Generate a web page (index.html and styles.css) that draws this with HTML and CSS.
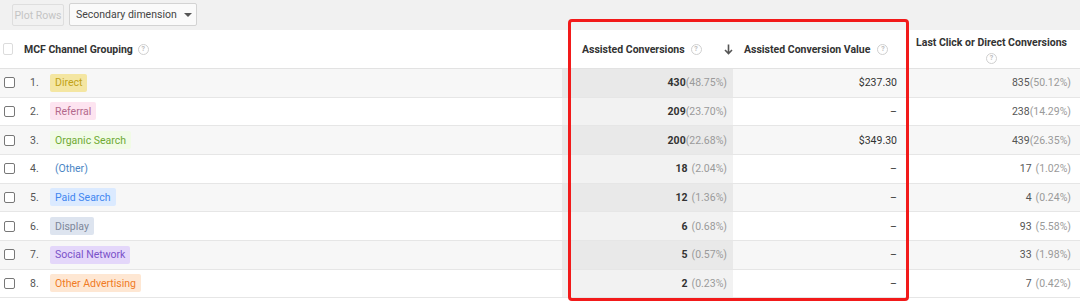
FILE: index.html
```html
<!DOCTYPE html>
<html>
<head>
<meta charset="utf-8">
<link rel="stylesheet" href="styles.css">
</head>
<body>
<div class="page">
  <div class="toolbar">
    <button class="btn btn-disabled">Plot Rows</button>
    <button class="btn btn-dim">Secondary dimension <span class="caret"></span></button>
  </div>
  <div class="table">
    <div class="row head">
      <div class="cell c-name">
        <span class="cb cb-light"></span>
        <span class="h-label">MCF Channel Grouping</span>
        <span class="help">?</span>
      </div>
      <div class="cell c-ac head-ac">
        <span class="h-label">Assisted Conversions</span>
        <span class="help">?</span>
        <svg class="sort" width="9" height="11" viewBox="0 0 9 11"><path d="M4.5 0.5 V9.5 M1 6 L4.5 9.5 L8 6" fill="none" stroke="#555" stroke-width="1.6"/></svg>
      </div>
      <div class="cell c-val head-val">
        <span class="h-label">Assisted Conversion Value</span>
        <span class="help">?</span>
      </div>
      <div class="cell c-last head-last">
        <span class="h-label">Last Click or Direct Conversions</span>
        <span class="help">?</span>
      </div>
    </div>

    <div class="row odd">
      <div class="cell c-name"><span class="cb"></span><span class="num">1.</span><span class="chip chip-direct">Direct</span></div>
      <div class="cell c-ac"><b>430</b><span class="pct">(48.75%)</span></div>
      <div class="cell c-val">$237.30</div>
      <div class="cell c-last">835<span class="pct">(50.12%)</span></div>
    </div>
    <div class="row">
      <div class="cell c-name"><span class="cb"></span><span class="num">2.</span><span class="chip chip-referral">Referral</span></div>
      <div class="cell c-ac"><b>209</b><span class="pct">(23.70%)</span></div>
      <div class="cell c-val">–</div>
      <div class="cell c-last">238<span class="pct">(14.29%)</span></div>
    </div>
    <div class="row odd">
      <div class="cell c-name"><span class="cb"></span><span class="num">3.</span><span class="chip chip-organic">Organic Search</span></div>
      <div class="cell c-ac"><b>200</b><span class="pct">(22.68%)</span></div>
      <div class="cell c-val">$349.30</div>
      <div class="cell c-last">439<span class="pct">(26.35%)</span></div>
    </div>
    <div class="row">
      <div class="cell c-name"><span class="cb"></span><span class="num">4.</span><span class="chip chip-other">(Other)</span></div>
      <div class="cell c-ac"><b>18</b><span class="pct sp">(2.04%)</span></div>
      <div class="cell c-val">–</div>
      <div class="cell c-last">17<span class="pct sp">(1.02%)</span></div>
    </div>
    <div class="row odd">
      <div class="cell c-name"><span class="cb"></span><span class="num">5.</span><span class="chip chip-paid">Paid Search</span></div>
      <div class="cell c-ac"><b>12</b><span class="pct sp">(1.36%)</span></div>
      <div class="cell c-val">–</div>
      <div class="cell c-last">4<span class="pct sp">(0.24%)</span></div>
    </div>
    <div class="row">
      <div class="cell c-name"><span class="cb"></span><span class="num">6.</span><span class="chip chip-display">Display</span></div>
      <div class="cell c-ac"><b>6</b><span class="pct sp">(0.68%)</span></div>
      <div class="cell c-val">–</div>
      <div class="cell c-last">93<span class="pct sp">(5.58%)</span></div>
    </div>
    <div class="row odd">
      <div class="cell c-name"><span class="cb"></span><span class="num">7.</span><span class="chip chip-social">Social Network</span></div>
      <div class="cell c-ac"><b>5</b><span class="pct sp">(0.57%)</span></div>
      <div class="cell c-val">–</div>
      <div class="cell c-last">33<span class="pct sp">(1.98%)</span></div>
    </div>
    <div class="row">
      <div class="cell c-name"><span class="cb"></span><span class="num">8.</span><span class="chip chip-otherad">Other Advertising</span></div>
      <div class="cell c-ac"><b>2</b><span class="pct sp">(0.23%)</span></div>
      <div class="cell c-val">–</div>
      <div class="cell c-last">7<span class="pct sp">(0.42%)</span></div>
    </div>
  </div>
  <div class="highlight"></div>
</div>
</body>
</html>
```

FILE: styles.css
```css
* { box-sizing: border-box; }
html, body {
  margin: 0;
  padding: 0;
  background: #ffffff;
  overflow: hidden;
}
.page {
  position: relative;
  width: 1080px;
  height: 303px;
  font-family: Roboto, "Liberation Sans", Arial, sans-serif;
  font-size: 10.5px;
  color: #333;
}
.toolbar {
  height: 30px;
  background: #f1f1f1;
  display: flex;
  align-items: flex-start;
  gap: 5px;
  padding: 3px 0 0 12px;
}
.btn {
  font-family: inherit;
  font-size: 10.5px;
  height: 23px;
  border-radius: 2px;
  padding: 0 5px;
  display: flex;
  align-items: center;
  white-space: nowrap;
  flex: none;
}
.btn-disabled {
  margin-top: 1px;
  height: 22px;
  width: 52px;
  justify-content: center;
  padding: 0;
  background: #f1f1f1;
  border: 1px solid #dedede;
  color: #c4c4c4;
}
.btn-dim {
  width: 128px;
  background: #fafafa;
  border: 1px solid #d3d3d3;
  color: #444;
  padding-left: 6px;
  gap: 7px;
}
.caret {
  width: 0;
  height: 0;
  border-left: 4px solid transparent;
  border-right: 4px solid transparent;
  border-top: 4px solid #555;
  margin-top: 1px;
}
.table {
  display: flex;
  flex-direction: column;
}
.row {
  display: grid;
  grid-template-columns: 562px 171px 172px 175px;
  height: 28.67px;
  border-bottom: 1px solid #e6e6e6;
  background: #ffffff;
}
.row.odd { background: #f7f7f7; }
.row.head {
  height: 39px;
  border-bottom: 1px solid #e2e2e2;
  background: #fff;
}
.cell {
  display: flex;
  align-items: center;
  justify-content: flex-end;
  white-space: nowrap;
}
.c-name {
  justify-content: flex-start;
  padding-left: 4px;
}
.c-ac {
  padding-right: 6px;
  background: #f2f2f2;
}
.row.odd .c-ac { background: #e9e9e9; }
.row.head .c-ac { background: #fff; }
.c-val { padding-right: 8px; color: #333; }
.c-last { padding-right: 9px; color: #555; }
b { font-weight: 700; color: #333; }
.pct { color: #9a9a9a; }
.pct.sp { margin-left: 4px; }

.h-label { font-weight: 700; color: #333; }
.head .c-name .h-label { margin-left: 11px; }
.help {
  flex: none;
  width: 11px;
  height: 11px;
  border: 1px solid #d0d0d0;
  border-radius: 50%;
  color: #bdbdbd;
  font-size: 7px;
  line-height: 9px;
  text-align: center;
  display: inline-block;
  margin-left: 5px;
  font-weight: 700;
}
.head-ac {
  justify-content: flex-start;
  padding-left: 20px;
}
.head-ac .help { margin-left: 6px; }
.sort {
  flex: none;
  margin-left: 22px;
}
.head-val {
  justify-content: flex-start;
  padding-left: 11px;
}
.head-val .help { margin-left: 7px; }
.head-last {
  flex-direction: column;
  justify-content: flex-start;
  align-items: center;
  padding: 6px 2px 0 0;
  gap: 4px;
}
.head-last .help { margin-left: 0; }

.cb {
  width: 11px;
  height: 11px;
  border: 1px solid #777;
  border-radius: 2px;
  background: #fff;
  flex: none;
}
.cb-light {
  border-color: #dcdcdc;
  width: 10px;
  height: 12px;
  margin-left: -1px;
}
.num {
  margin-left: 15px;
  width: 20px;
  color: #555;
}
.chip {
  height: 18px;
  padding: 0 5px;
  border-radius: 2px;
  display: inline-flex;
  align-items: center;
}
.chip-direct { background: #f4e6a2; color: #c2a317; }
.chip-referral { background: #fde4f0; color: #b3688c; }
.chip-organic { background: #f1fbe6; color: #6faa33; }
.chip-other { background: transparent; color: #4a86c5; }
.chip-paid { background: #dbeaff; color: #4286f0; }
.chip-display { background: #dde4ef; color: #7d879a; }
.chip-social { background: #e4d7fa; color: #7a52c9; }
.chip-otherad { background: #fee7d3; color: #f07b25; }

.highlight {
  position: absolute;
  left: 568px;
  top: 19px;
  width: 341px;
  height: 282px;
  border: 3px solid #f21a1a;
  border-radius: 4px;
  pointer-events: none;
}
```
